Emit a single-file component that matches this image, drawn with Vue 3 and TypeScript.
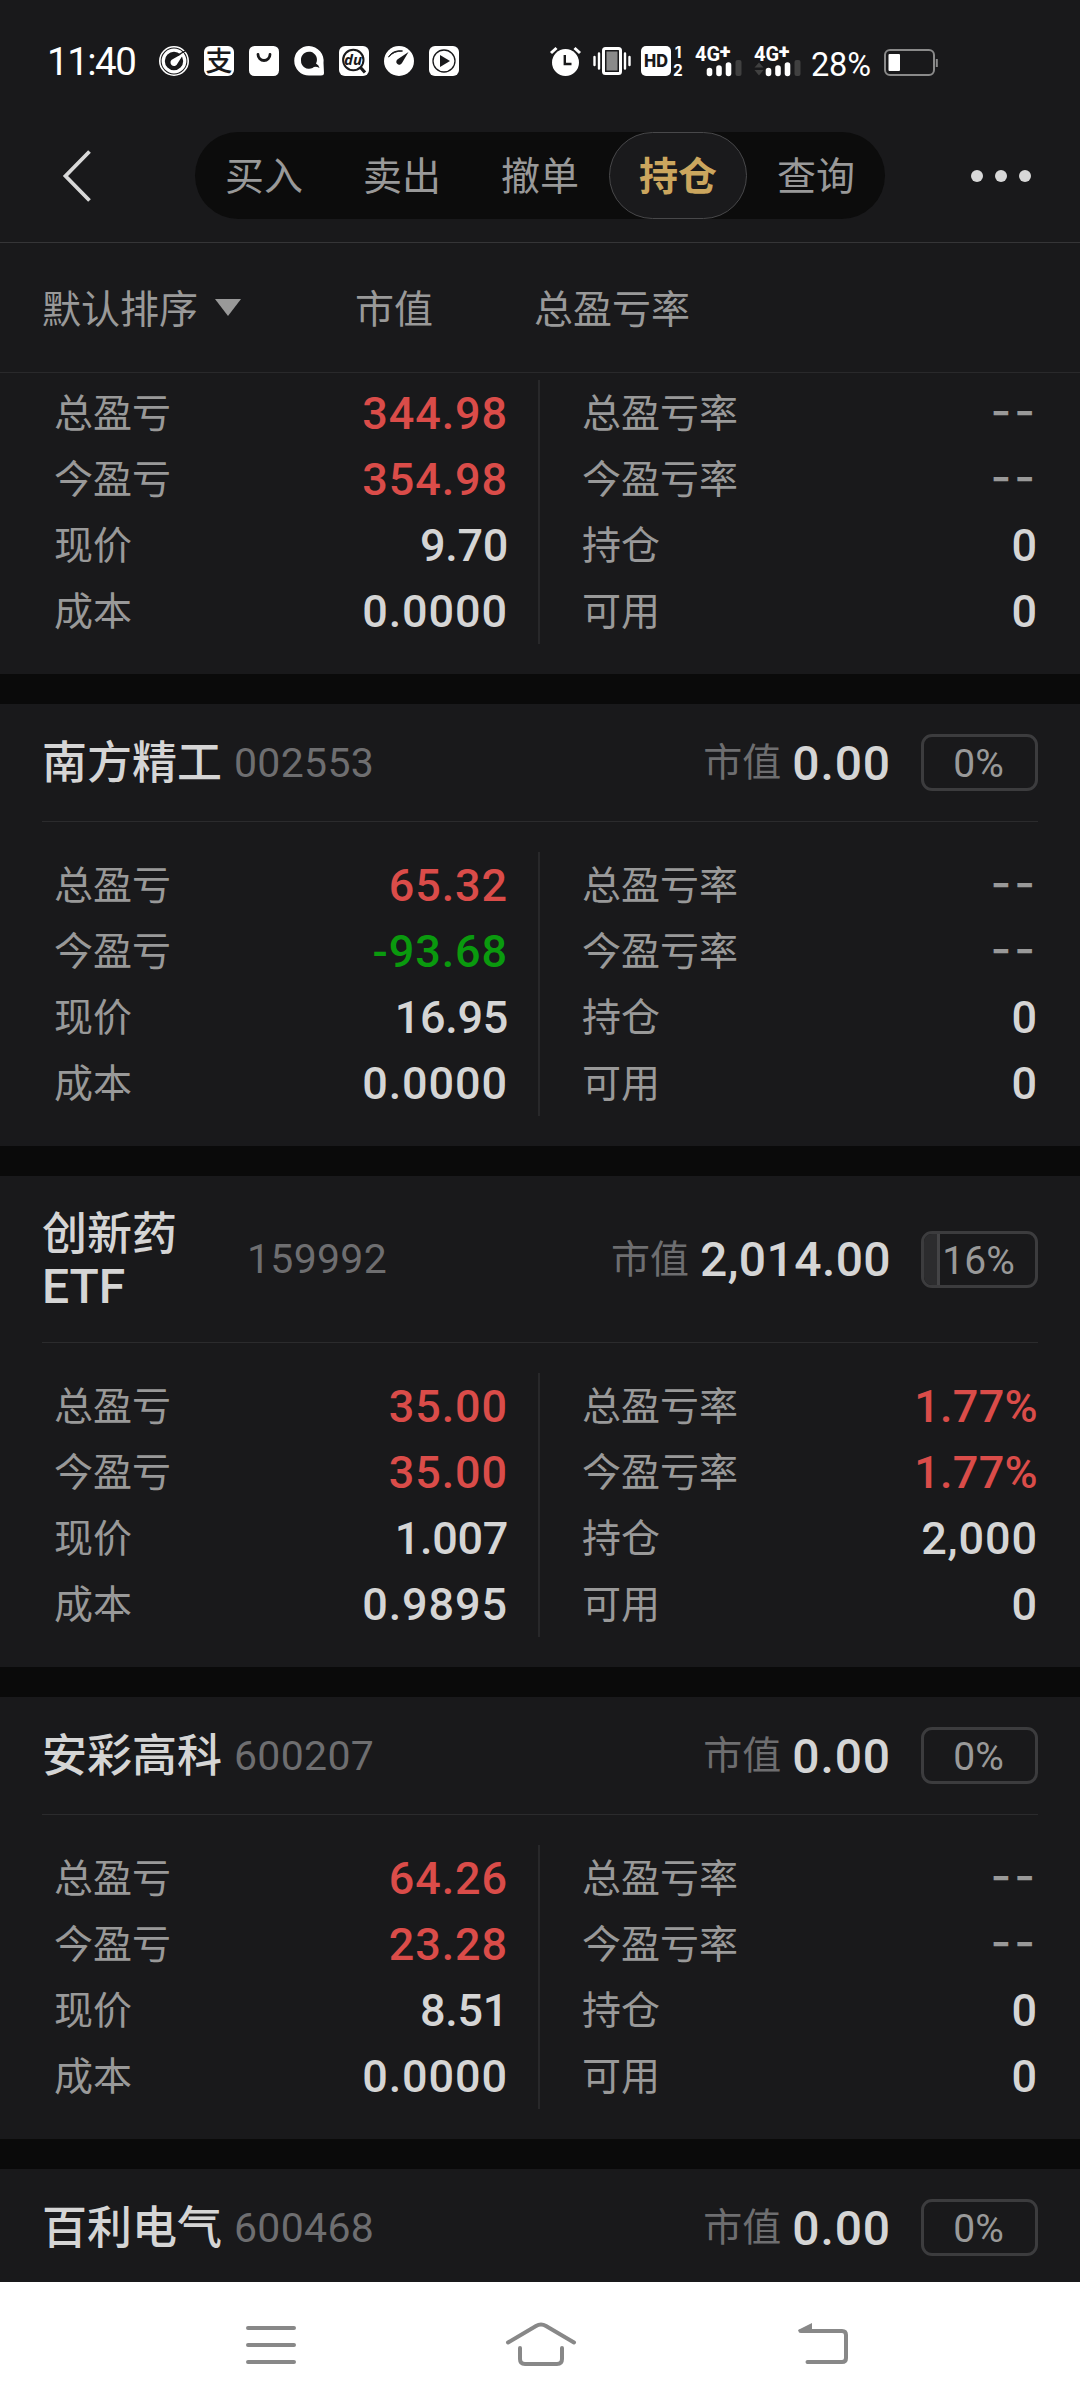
<script setup lang="ts">
interface Holding {
  name: string[]
  code: string
  value: string
  share: number
  total: string
  today: string
  price: string
  cost: string
  totalRate: string
  todayRate: string
  amount: string
  usable: string
}

const tabs: string[] = ['买入', '卖出', '撤单', '持仓', '查询']
const activeTab = '持仓'

const holdings: Holding[] = [
  { name: [], code: '', value: '', share: 0, total: '344.98', today: '354.98', price: '9.70', cost: '0.0000', totalRate: '--', todayRate: '--', amount: '0', usable: '0' },
  { name: ['南方精工'], code: '002553', value: '0.00', share: 0, total: '65.32', today: '-93.68', price: '16.95', cost: '0.0000', totalRate: '--', todayRate: '--', amount: '0', usable: '0' },
  { name: ['创新药', 'ETF'], code: '159992', value: '2,014.00', share: 16, total: '35.00', today: '35.00', price: '1.007', cost: '0.9895', totalRate: '1.77%', todayRate: '1.77%', amount: '2,000', usable: '0' },
  { name: ['安彩高科'], code: '600207', value: '0.00', share: 0, total: '64.26', today: '23.28', price: '8.51', cost: '0.0000', totalRate: '--', todayRate: '--', amount: '0', usable: '0' },
  { name: ['百利电气'], code: '600468', value: '0.00', share: 0, total: '', today: '', price: '', cost: '', totalRate: '', todayRate: '', amount: '', usable: '' },
]

function tone(v: string): string {
  if (v === '--') return 'none'
  return v.startsWith('-') ? 'down' : 'up'
}

// Figures with a 1 or a 7 are set a little closer
function fit(v: string): string {
  return /[17]/.test(v) ? 'tight' : ''
}

function leftRows(h: Holding) {
  return [
    { label: '总盈亏', value: h.total, cls: tone(h.total) },
    { label: '今盈亏', value: h.today, cls: tone(h.today) },
    { label: '现价', value: h.price, cls: '' },
    { label: '成本', value: h.cost, cls: '' },
  ]
}

function rightRows(h: Holding) {
  return [
    { label: '总盈亏率', value: h.totalRate, cls: tone(h.totalRate) },
    { label: '今盈亏率', value: h.todayRate, cls: tone(h.todayRate) },
    { label: '持仓', value: h.amount, cls: '' },
    { label: '可用', value: h.usable, cls: '' },
  ]
}
</script>

<template>
  <div class="screen">
    <div class="status">
      <span class="time">11:40</span>
      <div class="apps">
        <svg width="30" height="30" viewBox="0 0 30 30">
          <circle cx="15" cy="15" r="14.2" fill="none" stroke="#fff" stroke-width="1.6" />
          <circle cx="15" cy="15" r="10.8" fill="none" stroke="#fff" stroke-width="3.2" />
          <path d="M25.5 6.5 L18.5 17.5 A3.6 3.6 0 1 1 14 13 Z" fill="#fff" />
          <path d="M18.500 9.300 L27 4.500" stroke="#19191b" stroke-width="1.4" />
        </svg>
        <svg width="30" height="30" viewBox="0 0 30 30">
          <rect width="30" height="30" rx="6" fill="#fff" />
          <text x="15" y="24.500" font-size="27" font-weight="500" text-anchor="middle" fill="#19191b">支</text>
        </svg>
        <svg width="30" height="30" viewBox="0 0 30 30">
          <rect width="30" height="30" rx="5.5" fill="#fff" />
          <path d="M9 8.500 a6 6 0 0 0 12 0" fill="none" stroke="#19191b" stroke-width="2.8" stroke-linecap="round" />
        </svg>
        <svg width="30" height="30" viewBox="0 0 30 30">
          <path d="M15 0 A15 15 0 0 1 29.500 17 L30 27 Q30 29.500 27 29.500 H15 A14.700 14.700 0 0 1 15 0 Z" fill="#fff" />
          <path d="M7 14.500 A8 8 0 1 1 22 17.500 Q25 19 25.500 22 Q21 19.500 18.500 22 A8 8 0 0 1 7 14.500 Z" fill="#19191b" />
        </svg>
        <svg width="30" height="30" viewBox="0 0 30 30">
          <rect width="30" height="30" rx="6" fill="#fff" />
          <circle cx="14.300" cy="14" r="10.200" fill="none" stroke="#19191b" stroke-width="2" />
          <path d="M21.500 21.500 L26 26.500" stroke="#19191b" stroke-width="3.200" />
          <text x="14" y="18.800" class="du" text-anchor="middle">du</text>
        </svg>
        <svg width="30" height="30" viewBox="0 0 30 30">
          <circle cx="15" cy="15" r="15" fill="#fff" />
          <path d="M4.500 11 Q9 3.500 18.500 5 Q10 4.800 4.500 11 Z" fill="#19191b" stroke="#19191b" stroke-width="1" />
          <path d="M24.500 6 L18 17 A3 3 0 1 1 14 13 Z" fill="#19191b" />
        </svg>
        <svg width="30" height="30" viewBox="0 0 30 30">
          <rect width="30" height="30" rx="6" fill="#fff" />
          <circle cx="15" cy="15" r="11" fill="none" stroke="#19191b" stroke-width="1.300" />
          <path d="M11 9 L21 15 L11 21 Z" fill="#19191b" />
        </svg>
      </div>
      <div class="signals">
        <svg width="31" height="30" viewBox="0 0 31 30">
          <circle cx="15.500" cy="16.500" r="13.500" fill="#fff" />
          <path d="M1 7 L6.500 2 M24.500 2 L30 7" stroke="#fff" stroke-width="3" />
          <path d="M14.800 9 V18 H21.500" fill="none" stroke="#19191b" stroke-width="2.400" />
        </svg>
        <svg class="vib" width="38" height="30" viewBox="0 0 38 30">
          <rect x="10.500" y="2.500" width="17" height="25" rx="2" fill="none" stroke="#fff" stroke-width="3" />
          <rect x="13.500" y="5.500" width="11" height="19" fill="#8a8a8a" />
          <path d="M1.500 11 V19 M6 7.500 V22.500 M32 7.500 V22.500 M36.500 11 V19" stroke="#fff" stroke-width="2.400" stroke-linecap="round" />
        </svg>
        <svg class="hd" width="43" height="30" viewBox="0 0 43 30">
          <rect width="30" height="30" rx="5" fill="#fff" />
          <text x="15" y="21.300" class="hd-text" text-anchor="middle" textLength="24" lengthAdjust="spacingAndGlyphs">HD</text>
          <text x="37" y="12" class="tiny" text-anchor="middle">1</text>
          <text x="37" y="29.500" class="tiny" text-anchor="middle">2</text>
        </svg>
        <svg class="sig" width="48" height="30" viewBox="0 0 48 30">
          <text x="0" y="15" class="net">4G<tspan x="24.800" y="11.500" class="plus">+</tspan></text>
          <path d="M14.500 24.500 V27.500 M24 22 V27.500 M33.500 19 V27.500" stroke="#fff" stroke-width="5.600" stroke-linecap="round" />
          <rect x="40.500" y="14" width="6" height="16" rx="2" fill="#404040" />
        </svg>
        <svg class="sig" width="48" height="30" viewBox="0 0 48 30">
          <text x="0" y="15" class="net">4G<tspan x="24.800" y="11.500" class="plus">+</tspan></text>
          <path d="M0.500 21.500 L5 16.500 L9.500 21.500 Z M0.500 24 L5 29.500 L9.500 24 Z" fill="#404040" />
          <path d="M14.500 24.500 V27.500 M24 22 V27.500 M33.500 19 V27.500" stroke="#fff" stroke-width="5.600" stroke-linecap="round" />
          <rect x="40.500" y="14" width="6" height="16" rx="2" fill="#404040" />
        </svg>
        <span class="battery-text">28%</span>
        <svg class="battery" width="54" height="28" viewBox="0 0 54 28">
          <rect x="1" y="1" width="49" height="25" rx="5" fill="none" stroke="#8a8a8a" stroke-width="2" />
          <rect x="4.500" y="5" width="11.500" height="17" rx="1" fill="#fff" />
          <path d="M52.800 10 V18" stroke="#8a8a8a" stroke-width="2" />
        </svg>
      </div>
    </div>

    <header class="topbar">
      <svg class="back" width="30" height="52" viewBox="0 0 30 52">
        <path d="M27.500 1.500 L3.500 26 L27.500 50.500" fill="none" stroke="#d8d8d8" stroke-width="3.800" />
      </svg>
      <nav class="tabs">
        <span v-for="t in tabs" :key="t" class="tab" :class="{ active: t === activeTab }">{{ t }}</span>
      </nav>
      <div class="more"><i></i><i></i><i></i></div>
    </header>

    <div class="sortbar">
      <span class="sort">
        <span>默认排序</span>
        <svg width="26" height="17" viewBox="0 0 26 17"><path d="M0 0 H26 L13 17 Z" fill="#999" /></svg>
      </span>
      <span class="col-value">市值</span>
      <span>总盈亏率</span>
    </div>

    <main class="list">
      <section v-for="(h, i) in holdings" :key="i" class="card">
        <div v-if="h.code" class="head" :class="{ tall: h.name.length > 1 }">
          <div class="name" :class="{ wrap: h.name.length > 1 }">
            <div v-for="n in h.name" :key="n">{{ n }}</div>
          </div>
          <span class="code">{{ h.code }}</span>
          <span class="mv-label">市值</span>
          <span class="mv" :class="fit(h.value)">{{ h.value }}</span>
          <span class="share">
            <i v-if="h.share" class="fill" :style="{ width: h.share + '%' }"></i>
            <b>{{ h.share }}%</b>
          </span>
        </div>
        <div v-if="h.total" class="grid">
          <div class="side left">
            <div v-for="r in leftRows(h)" :key="r.label" class="row">
              <span class="label">{{ r.label }}</span>
              <span class="num" :class="[r.cls, fit(r.value)]">{{ r.value }}</span>
            </div>
          </div>
          <div class="side right">
            <div v-for="r in rightRows(h)" :key="r.label" class="row">
              <span class="label">{{ r.label }}</span>
              <span class="num" :class="[r.cls, fit(r.value)]">{{ r.value }}</span>
            </div>
          </div>
        </div>
      </section>
    </main>

    <footer class="navbar">
      <svg class="menu" width="50" height="50" viewBox="0 0 50 50">
        <path d="M2 8 H48 M2 25 H48 M2 42 H48" stroke="#888" stroke-width="4" stroke-linecap="round" />
      </svg>
      <svg class="home" width="72" height="50" viewBox="0 0 72 50">
        <path d="M3 22.500 L31 6 Q36 3 41 6 L69 22.500 M15 28 V39 Q15 44 20 44 H52 Q57 44 57 39 V28" fill="none" stroke="#888" stroke-width="4" stroke-linecap="round" />
      </svg>
      <svg width="52" height="50" viewBox="0 0 52 50">
        <path d="M4 11 H45 Q49 11 49 15 V38 Q49 42 45 42 H10.500" fill="none" stroke="#888" stroke-width="4" stroke-linecap="round" />
        <path d="M1 10 L15 3 V12.500 H2 Z" fill="#888" />
      </svg>
    </footer>
  </div>
</template>

<style>
body {
  margin: 0;
  background: #19191b;
}
</style>

<style scoped>
.screen {
  width: 1080px;
  height: 2408px;
  display: flex;
  flex-direction: column;
  overflow: hidden;
  background: #19191b;
  color: #999;
  font-family: Roboto, "Noto Sans CJK SC", sans-serif;
  font-size: 39px;
  line-height: 1;
}
.status {
  height: 109px;
  flex: none;
  box-sizing: border-box;
  padding: 13px 0 0 47px;
  display: flex;
  align-items: center;
  color: #fff;
}
.status svg {
  display: block;
  flex: none;
  overflow: visible;
}
.time {
  width: 112px;
  font-size: 38.5px;
  line-height: 48px;
  padding-top: 2px;
  letter-spacing: -1.5px;
}
.apps {
  display: flex;
  gap: 15px;
}
.signals {
  display: flex;
  align-items: center;
  margin-left: 91px;
}
.du {
  font: italic 700 15px "Open Sans", sans-serif;
  fill: #19191b;
}
.hd-text {
  font: 800 17.500px Inter, sans-serif;
  fill: #19191b;
}
.tiny {
  font: 700 15.500px Inter, sans-serif;
  fill: #fff;
}
.net {
  font: 700 20px Roboto, sans-serif;
  fill: #fff;
}
.plus {
  font-size: 20px;
  font-weight: 900;
}
.vib {
  margin-left: 12px;
}
.hd {
  margin-left: 10px;
}
.sig {
  margin-left: 11px;
}
.battery-text {
  width: 73px;
  margin-left: 9px;
  font-size: 32.500px;
  padding-top: 8px;
  letter-spacing: -0.2px;
}
.battery {
  margin-top: 3px;
}
.topbar {
  height: 133px;
  flex: none;
  display: flex;
  align-items: center;
  padding-left: 62px;
}
.tabs {
  display: flex;
  width: 690px;
  height: 87px;
  margin-left: 103px;
  border-radius: 44px;
  background: #0c0c0c;
}
.tab {
  box-sizing: border-box;
  width: 138px;
  padding-top: 3px;
  display: flex;
  align-items: center;
  justify-content: center;
  border: 1px solid transparent;
  border-radius: 44px;
}
.tab.active {
  background: #1a1a1c;
  border-color: #48484a;
  color: #cba65e;
  font-weight: 700;
}
.more {
  display: flex;
  gap: 12px;
  margin-left: 86px;
}
.more i {
  width: 12px;
  height: 12px;
  border-radius: 50%;
  background: #d8d8d8;
}
.sortbar {
  height: 129px;
  flex: none;
  box-sizing: content-box;
  display: flex;
  align-items: center;
  padding-left: 42px;
  border-top: 1px solid #353537;
  border-bottom: 1px solid #29292b;
}
.sortbar > span {
  padding-top: 5px;
}
.sort {
  display: flex;
  align-items: center;
  gap: 17px;
  width: 313px;
}
.sort svg {
  margin-top: -5px;
}
.col-value {
  width: 179px;
}
.list {
  flex: 1;
  min-height: 0;
  overflow: hidden;
  display: flex;
  flex-direction: column;
  gap: 30px;
  background: #0a0a0a;
}
.card {
  flex: none;
  background: #19191b;
}
.card:first-child {
  margin-top: -23px;
}
.card:last-child {
  height: 118px;
}
.head {
  height: 117px;
  margin: 0 42px;
  display: flex;
  align-items: center;
  border-bottom: 1px solid #2b2b2d;
}
.head.tall {
  height: 166px;
}
.name {
  padding-top: 3px;
  font-size: 45px;
  line-height: 52px;
  font-weight: 500;
  color: #d5d5d5;
  white-space: nowrap;
  margin-right: 12px;
}
.name.wrap {
  width: 193px;
}
.name.wrap div + div {
  font-size: 48px;
}
.code {
  font-size: 41px;
  letter-spacing: 0.3px;
  color: #6e6e70;
  padding-top: 1px;
}
.mv-label {
  margin-left: auto;
  color: #6e6e70;
  padding-top: 2px;
}
.mv {
  margin-left: 11px;
  padding-top: 2px;
  font-size: 48px;
  font-weight: 500;
  letter-spacing: 0.9px;
  color: #d5d5d5;
}
.mv.tight {
  letter-spacing: 0.4px;
}
.share {
  position: relative;
  box-sizing: border-box;
  width: 117px;
  height: 57px;
  margin-left: 30px;
  border: 3px solid #3c3c3e;
  border-radius: 11px;
  overflow: hidden;
  display: flex;
  align-items: center;
  justify-content: center;
}
.share b {
  position: relative;
  top: 2px;
  left: -1px;
  font-size: 39px;
  font-weight: 400;
}
.fill {
  position: absolute;
  left: -2px;
  top: 0;
  bottom: 0;
  box-sizing: border-box;
  background: #2c2c2e;
  border-right: 3px solid #444446;
}
.grid {
  display: flex;
  padding: 30px 42px 30px 54px;
}
.side {
  flex: none;
  box-sizing: border-box;
}
.left {
  width: 486px;
  padding-right: 30px;
  border-right: 2px solid #28282a;
}
.right {
  width: 498px;
  padding-left: 42px;
}
.row {
  height: 66px;
  display: flex;
  align-items: center;
  justify-content: space-between;
}
.label {
  padding-top: 2px;
}
.num {
  font-size: 45px;
  font-weight: 500;
  letter-spacing: 0.900px;
  color: #d5d5d5;
}
.num.tight {
  letter-spacing: -0.300px;
}
.right .num.tight {
  letter-spacing: 0.3px;
}
.num.up {
  color: #da4c49;
}
.num.down {
  color: #0a9a0e;
}
.num.none {
  color: #999;
  font-family: Inter, sans-serif;
  letter-spacing: 3px;
  padding-bottom: 5px;
}
.navbar {
  flex: none;
  height: 126px;
  background: #fff;
  display: flex;
  align-items: flex-start;
  padding: 38px 0 0 246px;
  box-sizing: border-box;
}
.home {
  margin: 0 220px 0 209px;
}
</style>
